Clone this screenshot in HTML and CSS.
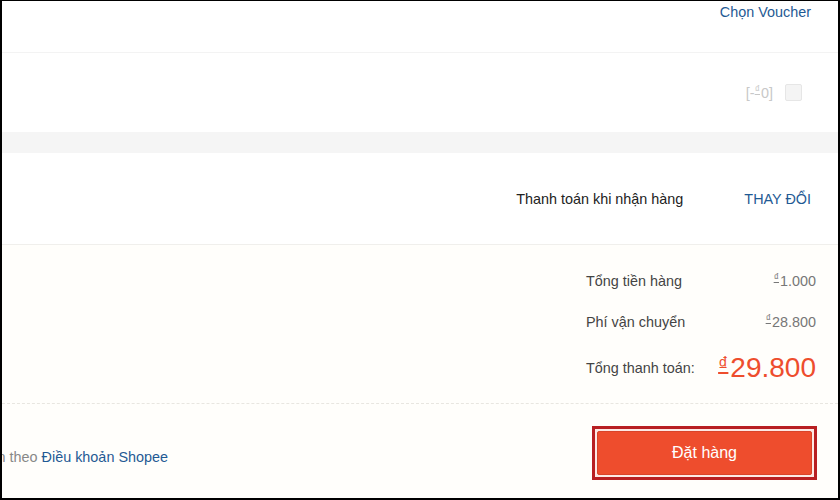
FILE: index.html
```html
<!DOCTYPE html>
<html lang="vi">
<head>
<meta charset="utf-8">
<link rel="stylesheet" href="styles.css">
</head>
<body>
<div class="frame">
  <div class="sec voucher">
    <a class="link">Chọn Voucher</a>
  </div>
  <div class="sec coin">
    <span class="coin-val">[-<span class="cur">₫</span>0]</span>
    <span class="checkbox"></span>
  </div>
  <div class="band"></div>
  <div class="sec pay">
    <span class="pay-method">Thanh toán khi nhận hàng</span>
    <a class="link upper">THAY ĐỔI</a>
  </div>
  <div class="sec summary">
    <div class="grid">
      <span class="lbl">Tổng tiền hàng</span>
      <span class="val"><span class="cur">₫</span>1.000</span>
      <span class="lbl">Phí vận chuyển</span>
      <span class="val"><span class="cur">₫</span>28.800</span>
      <span class="lbl">Tổng thanh toán:</span>
      <span class="val total"><span class="cur">₫</span>29.800</span>
    </div>
  </div>
  <div class="sec order">
    <div class="terms"><span class="terms-text">Nhấn "Đặt hàng" đồng nghĩa với việc bạn đồng ý tuân theo <a class="link">Điều khoản Shopee</a></span></div>
    <div class="highlight"><button class="btn">Đặt hàng</button></div>
  </div>
</div>
</body>
</html>
```
FILE: styles.css
```css
* { box-sizing: border-box; }
html, body { margin: 0; padding: 0; }
body {
  font-family: "Liberation Sans", Arial, sans-serif;
  font-size: 14.4px;
  color: #222;
  background: #fff;
}
.frame {
  width: 840px;
  height: 500px;
  border: 2px solid #000;
  border-top-width: 1px;
  background: #fff;
  overflow: hidden;
  display: flex;
  flex-direction: column;
}
.link { color: #1f5a94; text-decoration: none; }
.sec { display: flex; align-items: center; justify-content: flex-end; }
.voucher {
  height: 52px;
  align-items: flex-start;
  padding: 3px 27px 0 0;
  border-bottom: 1px solid #f3f3f3;
}
.coin {
  height: 79px;
  padding-right: 36px;
  gap: 12px;
}
.coin-val { color: #c8c8c8; }
.cur { font-size: 0.72em; vertical-align: 0.45em; text-decoration: underline; margin-right: 1px; }
.checkbox {
  width: 17px; height: 17px;
  border: 1px solid #e6e6e6;
  background: #f4f4f4;
  border-radius: 2px;
}
.band { height: 21px; background: #f5f5f5; }
.pay {
  height: 92px;
  padding-right: 27px;
  gap: 61px;
  border-bottom: 1px solid #f0efec;
}
.pay-method { color: #222; }
.summary {
  background: #fffefb;
  padding: 15px 22px 10px 0;
  border-bottom: 1px dashed #e8e6e0;
}
.grid {
  width: 230px;
  display: grid;
  grid-template-columns: max-content 1fr;
  grid-template-rows: 41px 41px 51px;
  align-items: center;
}
.lbl { color: #444; }
.val { justify-self: end; color: #777; }
.total { color: #ee4d2d; font-size: 28px; }
.total .cur { font-size: 20px; vertical-align: 6px; margin-right: 2px; }
.order {
  flex: 1;
  background: #fffefb;
  justify-content: space-between;
  align-items: flex-start;
  padding: 22px 21px 0 0;
}
.terms {
  width: 166px;
  display: flex;
  justify-content: flex-end;
  overflow: hidden;
  white-space: nowrap;
  margin-top: 23px;
  color: #888;
}
.highlight {
  border: 3px solid #b81f22;
  padding: 2px;
  background: #fde9e4;
}
.btn {
  display: block;
  width: 215px;
  height: 44px;
  background: #ee4d2d;
  border: 1px solid #d9442a;
  border-radius: 2px;
  color: #fff;
  font-family: "Liberation Sans", Arial, sans-serif;
  font-size: 16px;
  padding: 0;
}
```
